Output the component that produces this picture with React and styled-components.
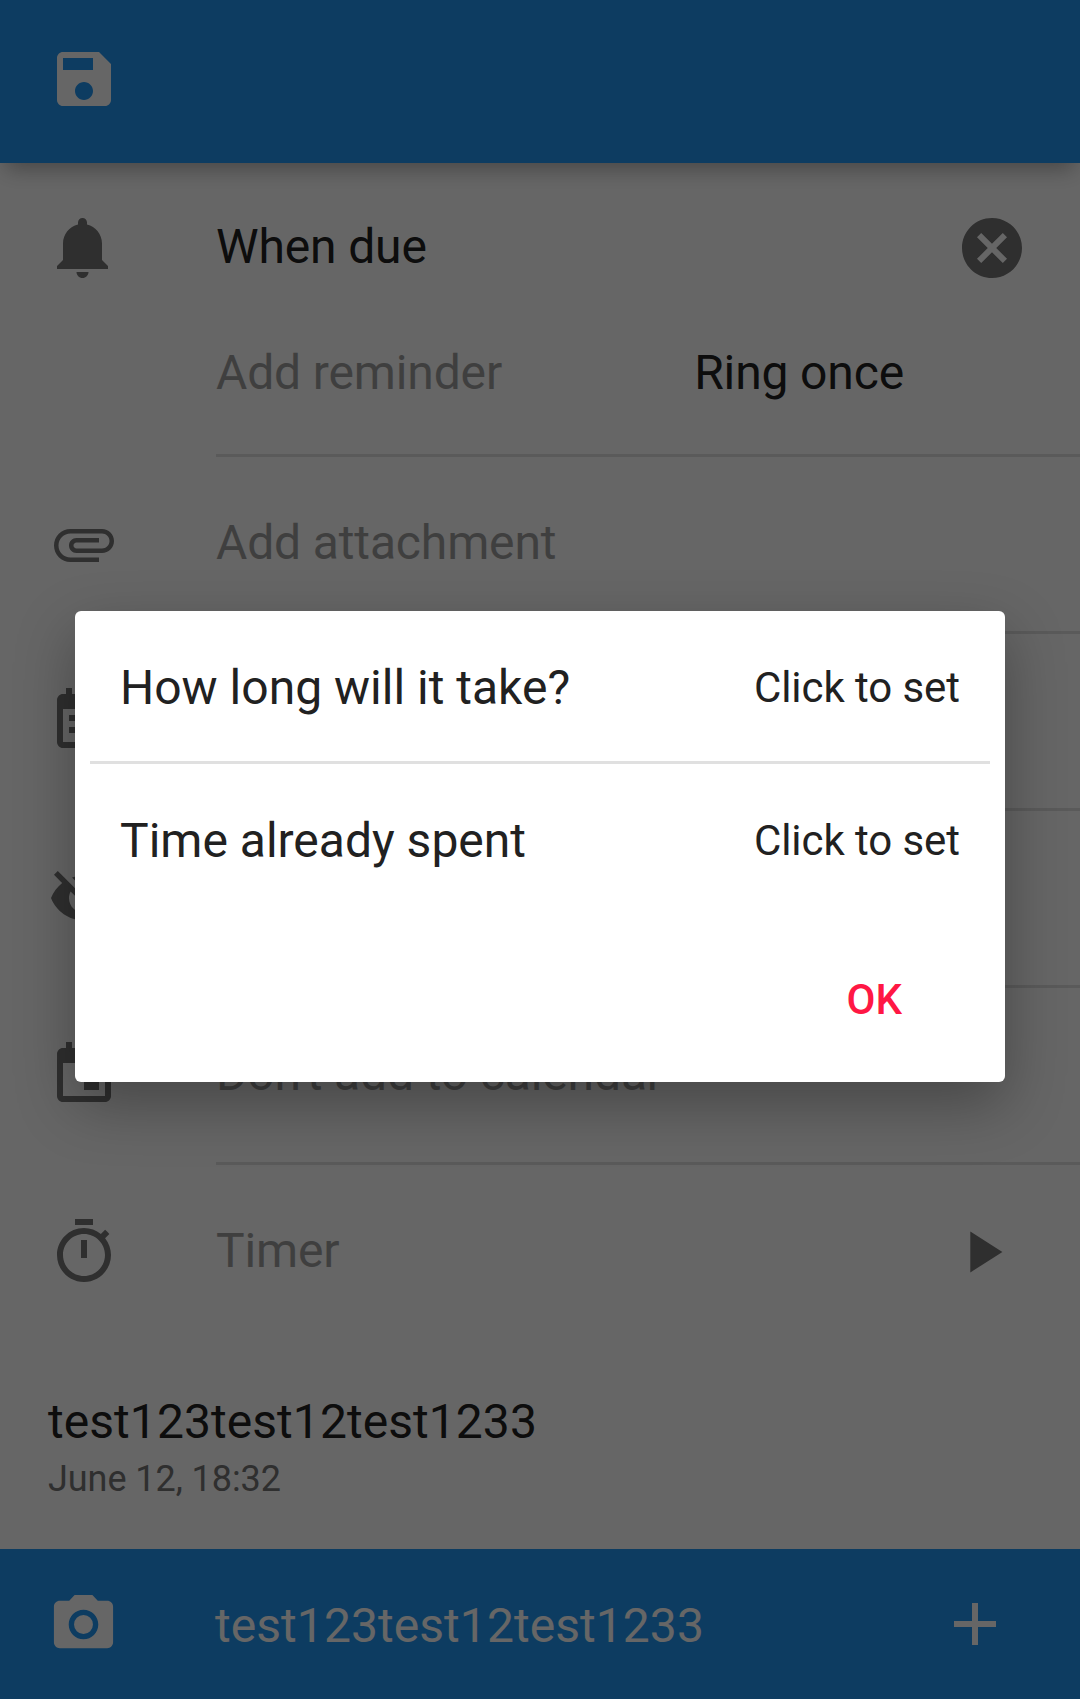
import React from "react";
import styled, { createGlobalStyle } from "styled-components";

const GlobalStyle = createGlobalStyle`
  *, *::before, *::after { box-sizing: border-box; }
  html, body { margin: 0; padding: 0; }
  body { background: #fff; font-family: Roboto, "Noto Sans", sans-serif; }
  button { font: inherit; border: 0; background: none; padding: 0; margin: 0; cursor: pointer; }
`;

const ICONS = {
  save: "M17 3H5c-1.11 0-2 .9-2 2v14c0 1.1.89 2 2 2h14c1.1 0 2-.9 2-2V7l-4-4zm-5 16c-1.66 0-3-1.34-3-3s1.34-3 3-3 3 1.34 3 3-1.34 3-3 3zm3-10H5V5h10v4z",
  bell: "M11.5 22c1.1 0 2-.9 2-2h-4c0 1.1.9 2 2 2zm6.5-6v-5.5c0-3.07-2.13-5.64-5-6.32V3.5c0-.83-.67-1.5-1.5-1.5S10 2.67 10 3.5v.68c-2.87.68-5 3.25-5 6.32V16l-2 2v1h17v-1l-2-2z",
  cancel: "M12 2C6.47 2 2 6.47 2 12s4.47 10 10 10 10-4.47 10-10S17.53 2 12 2zm5 13.59L15.59 17 12 13.41 8.41 17 7 15.59 10.59 12 7 8.41 8.41 7 12 10.59 15.59 7 17 8.41 13.41 12 17 15.59z",
  attachment: "M7.5 18C4.46 18 2 15.54 2 12.5S4.46 7 7.5 7H18c2.21 0 4 1.79 4 4s-1.79 4-4 4H9.5C8.12 15 7 13.88 7 12.5S8.12 10 9.5 10H17v1.5H9.5c-.55 0-1 .45-1 1s.45 1 1 1H18c1.38 0 2.5-1.12 2.5-2.5S19.38 8.5 18 8.5H7.5c-2.21 0-4 1.79-4 4s1.79 4 4 4H17V18H7.5z",
  note: "M17 10H7v2h10v-2zm2-7h-1V1h-2v2H8V1H6v2H5c-1.11 0-1.99.9-1.99 2L3 19c0 1.1.89 2 2 2h14c1.1 0 2-.9 2-2V5c0-1.1-.9-2-2-2zm0 16H5V8h14v11zm-5-5H7v2h7v-2z",
  hidden: "M12 7c2.76 0 5 2.24 5 5 0 .65-.13 1.26-.36 1.83l2.92 2.92c1.51-1.26 2.7-2.89 3.43-4.75-1.73-4.39-6-7.5-11-7.5-1.4 0-2.74.25-3.98.7l2.16 2.16C10.74 7.13 11.35 7 12 7zM2 4.27l2.28 2.28.46.46C3.08 8.3 1.78 10.02 1 12c1.73 4.39 6 7.5 11 7.5 1.55 0 3.03-.3 4.38-.84l.42.42L19.73 22 21 20.73 3.27 3 2 4.27zM7.53 9.8l1.55 1.55c-.05.21-.08.43-.08.65 0 1.66 1.34 3 3 3 .22 0 .44-.03.65-.08l1.55 1.55c-.67.33-1.41.53-2.2.53-2.76 0-5-2.24-5-5 0-.79.2-1.53.53-2.2z",
  event: "M17 12h-5v5h5v-5zM16 1v2H8V1H6v2H5c-1.11 0-1.99.9-1.99 2L3 19c0 1.1.89 2 2 2h14c1.1 0 2-.9 2-2V5c0-1.1-.9-2-2-2h-1V1h-2zm3 18H5V8h14v11z",
  timer: "M15 1H9v2h6V1zm-4 13h2V8h-2v6zm8.03-6.61l1.42-1.42c-.43-.51-.9-.99-1.41-1.41l-1.42 1.42C16.07 4.74 14.12 4 12 4c-4.97 0-9 4.03-9 9s4.02 9 9 9 9-4.03 9-9c0-2.12-.74-4.07-1.97-5.61zM12 20c-3.87 0-7-3.13-7-7s3.13-7 7-7 7 3.13 7 7-3.13 7-7 7z",
  play: "M8 5v14l11-7z",
  camera: "M12 8.8a3.2 3.2 0 1 0 0 6.4 3.2 3.2 0 0 0 0-6.4zM9 2L7.17 4H4c-1.1 0-2 .9-2 2v12c0 1.1.9 2 2 2h16c1.1 0 2-.9 2-2V6c0-1.1-.9-2-2-2h-3.17L15 2H9zm3 15c-2.76 0-5-2.24-5-5s2.24-5 5-5 5 2.24 5 5-2.24 5-5 5z",
  plus: "M19 13h-6v6h-2v-6H5v-2h6V5h2v6h6v2z",
};

const Svg = styled.svg`
  display: block;
  flex: none;
  width: ${(p) => p.$size}px;
  height: ${(p) => p.$size}px;
  fill: currentColor;
`;

function Icon({ name, size = 72 }) {
  return (
    <Svg $size={size} viewBox="0 0 24 24" aria-hidden="true">
      <path fillRule="evenodd" d={ICONS[name]} />
    </Svg>
  );
}

const Screen = styled.div`
  position: relative;
  width: 1080px;
  height: 1699px;
  overflow: hidden;
  display: flex;
  flex-direction: column;
  background: #fff;
`;

const AppBar = styled.header`
  flex: none;
  height: 163px;
  padding: 43px 48px 0;
  background: #2196f3;
  color: #fff;
  box-shadow: 0 12px 20px -6px rgba(0, 0, 0, 0.31);
`;

const Content = styled.main`
  flex: 1;
  display: flex;
  flex-direction: column;
`;

const Row = styled.div`
  flex: none;
  display: grid;
  grid-template-columns: 168px 1fr;
  height: ${(p) => p.$height || 177}px;
  padding-left: 48px;
  color: #757575;
`;

const IconCell = styled.div`
  display: flex;
  align-items: center;
  padding-bottom: ${(p) => (p.$ruled ? 3 : 0)}px;
`;

const RowBody = styled.div`
  display: flex;
  align-items: center;
  justify-content: space-between;
  padding-right: ${(p) => p.$right || 0}px;
  padding-bottom: ${(p) => p.$bottom || 0}px;
  border-bottom: ${(p) => (p.$ruled ? "3px solid #e0e0e0" : "0")};
`;

const Label = styled.span`
  font-size: 48px;
  line-height: 56px;
  letter-spacing: -0.14px;
  white-space: nowrap;
  padding-bottom: 2px;
  color: ${(p) => (p.$hint ? "#9e9e9e" : "#212121")};
`;

const Comment = styled.article`
  display: flex;
  flex-direction: column;
  gap: 8px;
  padding: 55px 48px 0;
`;

const CommentText = styled.div`
  font-size: 48px;
  line-height: 56px;
  letter-spacing: 0.06px;
  color: #212121;
`;

const CommentDate = styled.time`
  font-size: 36px;
  line-height: 42px;
  letter-spacing: -0.06px;
  color: #757575;
`;

const BottomBar = styled.footer`
  flex: none;
  display: flex;
  align-items: center;
  height: 150px;
  padding: 0 69px 0 48px;
  background: #2196f3;
  color: #fff;
`;

const BottomText = styled.span`
  flex: 1;
  padding: 4px 0 0 96px;
  font-size: 48px;
  line-height: 56px;
  letter-spacing: 0.06px;
`;

const Scrim = styled.div`
  position: absolute;
  inset: 0;
  display: flex;
  justify-content: center;
  align-items: flex-start;
  padding-top: 611px;
  background: rgba(0, 0, 0, 0.6);
`;

const Dialog = styled.section`
  display: flex;
  flex-direction: column;
  width: 930px;
  height: 471px;
  padding: 0 15px;
  border-radius: 6px;
  background: #fff;
  color: #212121;
  box-shadow: 0 22px 60px rgba(0, 0, 0, 0.31);
`;

const DialogRow = styled.div`
  flex: none;
  display: flex;
  align-items: center;
  justify-content: space-between;
  height: ${(p) => (p.$ruled ? 153 : 150)}px;
  padding: 3px 30px 0;
  border-bottom: ${(p) => (p.$ruled ? "3px solid #e0e0e0" : "0")};
`;

const Question = styled.span`
  font-size: 48px;
  line-height: 56px;
`;

const SetButton = styled.button`
  font-size: 42px;
  line-height: 50px;
  letter-spacing: -0.06px;
  color: #212121;
`;

const DialogActions = styled.div`
  flex: 1;
  display: flex;
  align-items: center;
  justify-content: flex-end;
  padding: 3px 88px 0 0;
`;

const OkButton = styled.button`
  font-size: 42px;
  font-weight: 500;
  line-height: 50px;
  color: #ff1744;
`;

export default function App() {
  return (
    <>
      <GlobalStyle />
      <Screen>
        <AppBar>
          <Icon name="save" />
        </AppBar>
        <Content>
          <Row $height={170}>
            <IconCell><Icon name="bell" /></IconCell>
            <RowBody $right={52}>
              <Label>When due</Label>
              <Icon name="cancel" />
            </RowBody>
          </Row>
          <Row $height={124}>
            <IconCell />
            <RowBody $ruled $right={176} $bottom={39}>
              <Label $hint>Add reminder</Label>
              <Label>Ring once</Label>
            </RowBody>
          </Row>
          <Row>
            <IconCell $ruled><Icon name="attachment" /></IconCell>
            <RowBody $ruled><Label $hint>Add attachment</Label></RowBody>
          </Row>
          <Row>
            <IconCell $ruled><Icon name="note" /></IconCell>
            <RowBody $ruled />
          </Row>
          <Row>
            <IconCell $ruled><Icon name="hidden" /></IconCell>
            <RowBody $ruled />
          </Row>
          <Row>
            <IconCell $ruled><Icon name="event" /></IconCell>
            <RowBody $ruled><Label $hint>Don't add to calendar</Label></RowBody>
          </Row>
          <Row $height={174}>
            <IconCell><Icon name="timer" /></IconCell>
            <RowBody $right={63}>
              <Label $hint>Timer</Label>
              <Icon name="play" size={70} />
            </RowBody>
          </Row>
          <Comment>
            <CommentText>test123test12test1233</CommentText>
            <CommentDate>June 12, 18:32</CommentDate>
          </Comment>
        </Content>
        <BottomBar>
          <Icon name="camera" size={71} />
          <BottomText>test123test12test1233</BottomText>
          <Icon name="plus" />
        </BottomBar>
        <Scrim>
          <Dialog role="dialog">
            <DialogRow $ruled>
              <Question>How long will it take?</Question>
              <SetButton>Click to set</SetButton>
            </DialogRow>
            <DialogRow>
              <Question>Time already spent</Question>
              <SetButton>Click to set</SetButton>
            </DialogRow>
            <DialogActions>
              <OkButton>OK</OkButton>
            </DialogActions>
          </Dialog>
        </Scrim>
      </Screen>
    </>
  );
}
